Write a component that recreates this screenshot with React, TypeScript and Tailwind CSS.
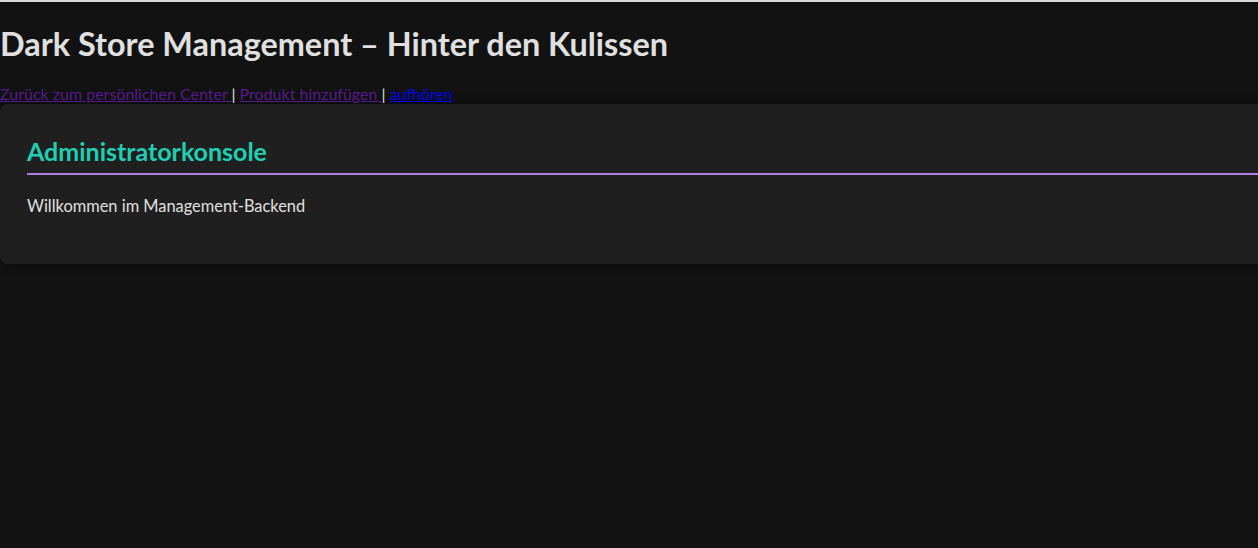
export default function App() {
    return (
        <div
            className="min-h-[548px] overflow-hidden bg-[#121212] text-[#e0e0e0] border-t-2 border-[#d8d8d8]"
            style={{ fontFamily: 'Lato, "Noto Sans", sans-serif' }}
        >
            <h1 className="pt-[22px] text-[32.4px] leading-[40px] font-bold text-[#e0e0e0]">
                Dark Store Management – Hinter den Kulissen
            </h1>
            <nav className="mt-[20px] text-[16px] leading-[20px]">
                <a href="#" className="underline text-[#551a8b]">Zurück zum persönlichen Center </a>
                <span> | </span>
                <a href="#" className="underline text-[#551a8b]">Produkt hinzufügen </a>
                <span> | </span>
                <a href="#" className="underline text-[#0000ee]">aufhören</a>
            </nav>
            <div className="w-[1300px] h-[160px] rounded-lg bg-[#1f1f1f] px-[27px] pt-[32px] shadow-[0_0_10px_rgba(0,0,0,0.5)]">
                <h2 className="text-[25px] leading-[30px] font-bold text-[#1fcfb3] border-b-2 border-[#b07ee0] pb-[7px]">
                    Administratorkonsole
                </h2>
                <p className="mt-[20px] text-[16.4px] leading-[22px] text-[#e0e0e0]">
                    Willkommen im Management-Backend
                </p>
            </div>
        </div>
    )
}
